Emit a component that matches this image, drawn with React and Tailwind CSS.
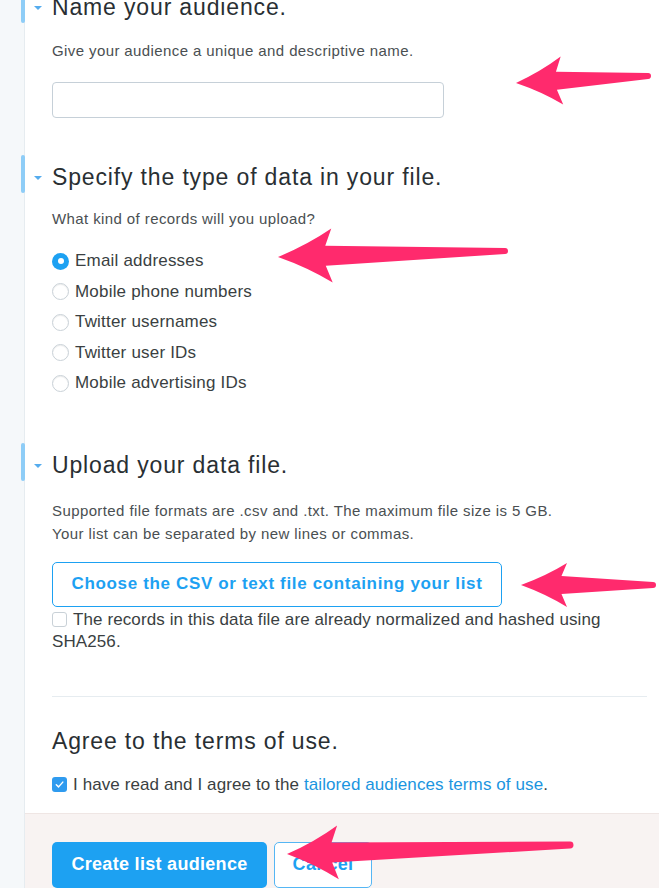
import React from "react";

function Arrow({ tip, tail, H, W, s1, s2 }) {
  const [x1, y1] = tip;
  const [x2, y2] = tail;
  const dx = x2 - x1;
  const dy = y2 - y1;
  const len = Math.hypot(dx, dy);
  const ang = (Math.atan2(dy, dx) * 180) / Math.PI;
  const d = `M0,0 Q${H * 0.55},${-W * 0.42} ${H},${-W} L${H * 0.88},${-s1} L${len},${-s2} A${s2} ${s2} 0 0 1 ${len},${s2} L${H * 0.88},${s1} L${H},${W} Q${H * 0.55},${W * 0.42} 0,0 Z`;
  return <path d={d} transform={`translate(${x1} ${y1}) rotate(${ang})`} fill="#ff2a6d" />;
}

function SectionHeading({ children, className = "", accent = true }) {
  return (
    <div className={"relative " + className}>
      {accent && (
        <>
          <div className="absolute left-[-31px] top-[-8px] h-[38px] w-[4px] rounded-full bg-[#8ecdf7]" />
          <div className="absolute left-[-18px] top-[13px] h-0 w-0 border-x-[4px] border-t-[4px] border-x-transparent border-t-[#55acee]" />
        </>
      )}
      <h2 className="text-[23px] leading-[28px] tracking-[0.85px] text-[#292f33]">{children}</h2>
    </div>
  );
}

function Radio({ checked, label }) {
  return (
    <div className="flex h-[30.5px] items-center">
      {checked ? (
        <span className="flex h-[17px] w-[17px] items-center justify-center rounded-full bg-[#1da1f2]">
          <span className="h-[6px] w-[6px] rounded-full bg-white" />
        </span>
      ) : (
        <span className="h-[17px] w-[17px] rounded-full border border-[#c9d1d7] bg-white shadow-[inset_0_1px_1px_rgba(0,0,0,0.08)]" />
      )}
      <span className="ml-[6px] text-[17px] leading-[22px] tracking-[0.2px] text-[#3a3f42]">{label}</span>
    </div>
  );
}

export default function App() {
  return (
    <div className="relative flex h-[888px] w-[659px] overflow-hidden bg-[#f5f8fa] font-['Liberation_Sans',Arial,sans-serif]">
      <div className="w-[25px] shrink-0 border-r border-[#e6ecf0]" />
      <div className="flex flex-1 flex-col bg-white">
        <div className="pl-[27px] pr-[12px]">
          <SectionHeading className="mt-[-7px]">Name your audience.</SectionHeading>
          <p className="mt-[20px] text-[15px] leading-[20px] tracking-[0.4px] text-[#4a4f52]">
            Give your audience a unique and descriptive name.
          </p>
          <input
            type="text"
            className="mt-[21px] block h-[36px] w-[392px] rounded-[4px] border border-[#c6d0d8] bg-white px-2 outline-none"
          />

          <SectionHeading className="mt-[45px]">Specify the type of data in your file.</SectionHeading>
          <p className="mt-[18px] text-[15px] leading-[20px] tracking-[0.4px] text-[#4a4f52]">
            What kind of records will you upload?
          </p>
          <div className="mt-[17px] flex flex-col">
            <Radio checked label="Email addresses" />
            <Radio label="Mobile phone numbers" />
            <Radio label="Twitter usernames" />
            <Radio label="Twitter user IDs" />
            <Radio label="Mobile advertising IDs" />
          </div>

          <SectionHeading className="mt-[52px]">Upload your data file.</SectionHeading>
          <p className="mt-[20px] text-[15px] leading-[23px] tracking-[0.4px] text-[#4a4f52]">
            Supported file formats are .csv and .txt. The maximum file size is 5 GB.
            <br />
            Your list can be separated by new lines or commas.
          </p>
          <button className="mt-[17px] flex h-[45px] w-[450px] items-center justify-center rounded-[5px] border-[1.5px] border-[#1da1f2] bg-white text-[17px] font-bold tracking-[0.65px] text-[#1da1f2]">
            Choose the CSV or text file containing your list
          </button>
          <div className="mt-[2px] text-[17px] leading-[22px] tracking-[0.1px] text-[#3a3f42]">
            <span className="mr-[6px] inline-block h-[15px] w-[15px] translate-y-[2px] rounded-[3px] border border-[#c9d1d7] bg-white align-baseline" />
            The records in this data file are already normalized and hashed using SHA256.
          </div>

          <div className="mt-[43px] h-px bg-[#e6ecf0]" />

          <SectionHeading className="mt-[30px]" accent={false}>
            Agree to the terms of use.
          </SectionHeading>
          <div className="mt-[19px] flex items-center text-[17px] leading-[22px] tracking-[0.1px] text-[#3a3f42]">
            <span className="mr-[6px] flex h-[15px] w-[15px] items-center justify-center rounded-[3px] bg-[#2f9bef]">
              <svg width="11" height="11" viewBox="0 0 12 12" fill="none">
                <path d="M2.5 6.3 L5 8.6 L9.6 3.4" stroke="white" strokeWidth="1.6" strokeLinecap="round" strokeLinejoin="round" />
              </svg>
            </span>
            <span>
              I have read and I agree to the <span className="text-[#1b95e0]">tailored audiences terms of use</span>.
            </span>
          </div>
        </div>

        <div className="mt-[17px] flex flex-1 gap-[7px] border-t border-[#efe6e4] bg-[#f8f3f2] pl-[27px] pt-[28px]">
          <button className="h-[46px] w-[215px] rounded-[5px] bg-[#1da1f2] text-[18px] font-bold tracking-[0.3px] text-white">
            Create list audience
          </button>
          <button className="h-[46px] w-[98px] rounded-[5px] border-[1.5px] border-[#55b6f4] bg-white text-[18px] font-bold tracking-[0.3px] text-[#1da1f2]">
            Cancel
          </button>
        </div>
      </div>

      <svg className="pointer-events-none absolute inset-0" width="659" height="888">
        <Arrow tip={[516, 83]} tail={[648, 76]} H={46} W={24} s1={9} s2={3} />
        <Arrow tip={[278, 257]} tail={[505, 251]} H={54} W={27} s1={10} s2={3} />
        <Arrow tip={[521, 585]} tail={[653, 585]} H={46} W={22} s1={9} s2={3} />
        <Arrow tip={[287, 854]} tail={[570, 845]} H={51} W={27} s1={10} s2={3.5} />
      </svg>
    </div>
  );
}
